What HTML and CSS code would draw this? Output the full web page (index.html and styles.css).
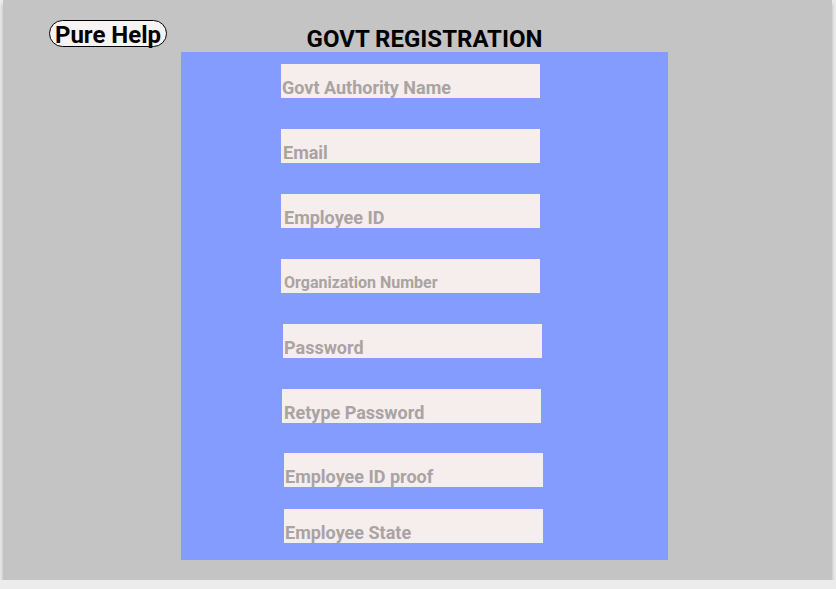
FILE: index.html
```html
<!DOCTYPE html>
<html>
<head>
<meta charset="utf-8">
<link rel="stylesheet" href="styles.css">
</head>
<body>
<div class="frame">
  <div class="brand">Pure Help</div>
  <div class="main">
    <h1 class="title">GOVT REGISTRATION</h1>
    <div class="panel">
      <div class="field">Govt Authority Name</div>
      <div class="field f2">Email</div>
      <div class="field f3">Employee ID</div>
      <div class="field small">Organization Number</div>
      <div class="field sh2">Password</div>
      <div class="field sh1 f2">Retype Password</div>
      <div class="field sh3 tight">Employee ID proof</div>
      <div class="field sh3 close">Employee State</div>
    </div>
  </div>
</div>
</body>
</html>
```

FILE: styles.css
```css
html, body {
  margin: 0;
  padding: 0;
  background: #ececec;
}
body {
  font-family: Roboto, "Liberation Sans", sans-serif;
}
.frame {
  margin-left: 3px;
  width: 829px;
  height: 580px;
  background: #c4c4c4;
  box-shadow: 0 4px 4px rgba(0, 0, 0, 0.25);
  display: flex;
  align-items: flex-start;
}
.brand {
  margin-left: 46px;
  margin-top: 20px;
  width: 116px;
  height: 23px;
  padding-top: 2px;
  border: 1px solid #000;
  border-radius: 14px;
  background: #f8f4f4;
  font-weight: 700;
  font-size: 24px;
  line-height: 24px;
  text-align: center;
  color: #000;
}
.main {
  margin-left: 14px;
  width: 487px;
  display: flex;
  flex-direction: column;
  align-items: center;
}
.title {
  margin: 27px 0 0 0;
  font-size: 24px;
  font-weight: 700;
  line-height: 25px;
  color: #000;
}
.panel {
  align-self: stretch;
  height: 508px;
  box-sizing: border-box;
  background: #839cfd;
  padding: 12px 0 0 100px;
  display: flex;
  flex-direction: column;
  gap: 31px;
}
.field {
  width: 259px;
  height: 34px;
  box-sizing: border-box;
  background: #f6eeec;
  color: #a9a3a3;
  font-weight: 700;
  font-size: 18px;
  line-height: 18px;
  padding: 15px 0 0 1px;
  white-space: nowrap;
}
.f2 { padding-left: 2px; }
.f3 { padding-left: 3px; }
.small {
  font-size: 16px;
  padding: 15px 0 0 3px;
}
.sh1 { margin-left: 1px; }
.sh2 { margin-left: 2px; }
.sh3 { margin-left: 3px; }
.tight { margin-top: -1px; }
.close { margin-top: -9px; }
```
